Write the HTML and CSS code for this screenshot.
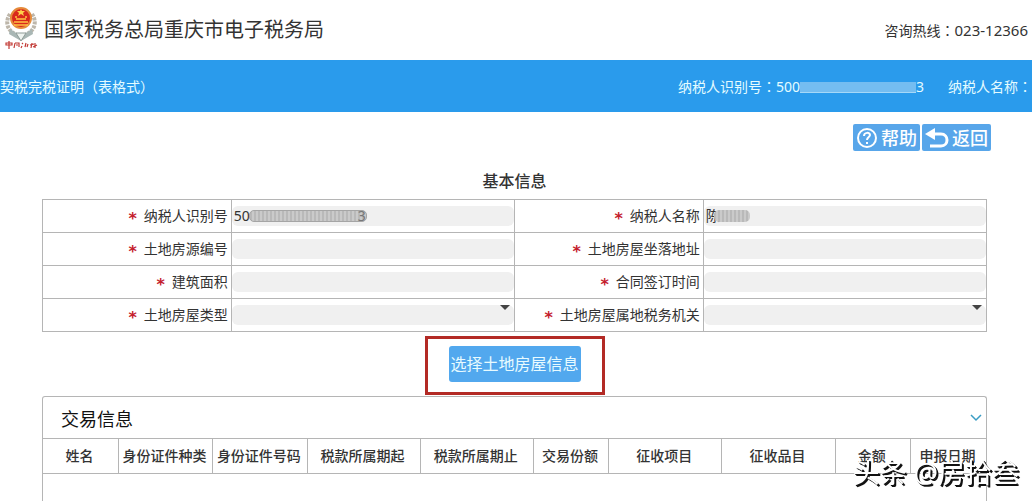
FILE: index.html
```html
<!DOCTYPE html>
<html lang="zh-CN">
<head>
    <meta charset="UTF-8">
    <meta name="viewport" content="width=device-width, initial-scale=1.0">
    <title>国家税务总局重庆市电子税务局</title>
    <link rel="stylesheet" href="styles.css">
</head>
<body>

    <header class="top">
        <svg class="logo" width="34" height="44" viewBox="0 0 34 44" aria-hidden="true">
            <path d="M6 8C0 17 4 26 15 30M28 8c6 9 2 18-9 22" fill="none" stroke="#bdb6aa" stroke-width="4" stroke-dasharray="3 1"/>
            <path d="M6 23l11 7 11-7 1 5-12 7-12-7z" fill="#a9b7b5"/>
            <path d="M12 27l5 8 5-8z" fill="#eef3f0" stroke="#8f9c98"/>
            <circle cx="17" cy="12" r="10" fill="#d9281c" stroke="#e58b3b" stroke-width="2"/>
            <path d="M17 3l1 2h3l-2 2 1 3-3-2-3 2 1-3-2-2h3z" fill="#ffd04a"/>
            <path d="M11 11h2M21 11h2M12 13h10M10 16h14M10 19h14" stroke="#ffc343" stroke-width="1.5"/>
            <path d="M2 37h6v2H2zM5 35v8M11 37l-1 5M11 37h4v4M12 39h2M18 37l1 1M18 40l-1 2M22 37l-1 4M24 38l-1 3M28 37l-1 5M26 39l4-1M29 41l4-2M31 37v5" fill="none" stroke="#c23a35" stroke-width="1.2"/>
        </svg>
        <h1>国家税务总局重庆市电子税务局</h1>
        <p class="hotline">咨询热线<span class="colon">：</span><span class="tel">023-12366</span></p>
    </header>

    <div class="bar">
        <span class="page-name">契税完税证明<span class="colon">（</span>表格式<span class="colon">）</span></span>
        <span>纳税人识别号<span class="colon">：</span>500<span class="bar-mask"></span>3</span>
        <span class="payer">纳税人名称<span class="colon">：</span></span>
    </div>

    <main>
        <div class="tools">
            <button type="button">
                <svg width="22" height="22" viewBox="0 0 22 22" fill="none" stroke="#fff" stroke-width="2" aria-hidden="true">
                    <circle cx="11" cy="11" r="9"/>
                    <path d="M8 9c0-4 6-4 6-1 0 2-3 2-3 5M11 15v2"/>
                </svg>
                帮助
            </button>
            <button type="button">
                <svg width="24" height="22" viewBox="0 0 24 22" aria-hidden="true">
                    <path d="M0 7l10-6v12z" fill="#fff"/>
                    <path d="M8 7h8c8 0 8 12 0 12H5" fill="none" stroke="#fff" stroke-width="3"/>
                </svg>
                返回
            </button>
        </div>

        <h2>基本信息</h2>
        <table class="info">
            <tr>
                <th><label for="payer-id">纳税人识别号</label></th>
                <td><input type="text" id="payer-id" value="50" readonly><span class="mask mask-id">3</span></td>
                <th><label for="payer-name">纳税人名称</label></th>
                <td><input type="text" id="payer-name" value="陈" readonly><span class="mask mask-name"></span></td>
            </tr>
            <tr>
                <th><label for="house-no">土地房源编号</label></th>
                <td><input type="text" id="house-no" readonly></td>
                <th><label for="address">土地房屋坐落地址</label></th>
                <td><input type="text" id="address" readonly></td>
            </tr>
            <tr>
                <th><label for="area">建筑面积</label></th>
                <td><input type="text" id="area" readonly></td>
                <th><label for="sign-date">合同签订时间</label></th>
                <td><input type="text" id="sign-date" readonly></td>
            </tr>
            <tr>
                <th><label for="house-type">土地房屋类型</label></th>
                <td><select id="house-type"><option></option></select></td>
                <th><label for="office">土地房屋属地税务机关</label></th>
                <td><select id="office"><option></option></select></td>
            </tr>
        </table>

        <div class="choose">
            <button type="button">选择土地房屋信息</button>
        </div>

        <section class="deal">
            <div class="deal-head">
                <h3>交易信息</h3>
                <svg width="12" height="10" viewBox="0 0 12 10" fill="none" stroke="#3b9dc4" stroke-width="1.5" aria-hidden="true">
                    <path d="M1 1l5 5 5-5"/>
                </svg>
            </div>
            <table class="deal-table">
                <colgroup>
                    <col class="w8"><col class="w10"><col class="w10"><col class="w12"><col class="w12">
                    <col class="w8"><col class="w12"><col class="w12"><col class="w8"><col class="w8">
                </colgroup>
                <tr>
                    <th>姓名</th>
                    <th>身份证件种类</th>
                    <th>身份证件号码</th>
                    <th>税款所属期起</th>
                    <th>税款所属期止</th>
                    <th>交易份额</th>
                    <th>征收项目</th>
                    <th>征收品目</th>
                    <th>金额</th>
                    <th>申报日期</th>
                </tr>
            </table>
        </section>
    </main>

    <div class="watermark">头条 @房拾叁</div>

</body>
</html>
```

FILE: styles.css
```css
* {
    box-sizing: border-box;
}
body {
    margin: 0;
    height: 100vh;
    display: flex;
    flex-direction: column;
    overflow: hidden;
    font-family: "Noto Sans", "Noto Sans CJK SC", sans-serif;
    font-size: 14px;
    line-height: 20px;
    color: #333;
    background: #fff;
}
h1, h2, h3, p {
    margin: 0;
    font-weight: normal;
}
button, input, select {
    font: inherit;
    border: none;
}
/* centred punctuation */
.colon {
    font-family: "Noto Sans CJK TC", sans-serif;
    font-feature-settings: "locl" 0;
    -webkit-locale: "zh-TW";
}

/* header */
.top {
    display: flex;
    align-items: center;
    height: 60px;
    padding: 0 4px;
}
.logo {
    margin-right: 6px;
    margin-bottom: 4px;
}
h1 {
    font-size: 20px;
    line-height: 28px;
}
.hotline {
    margin-left: auto;
}
.tel {
    font-size: 15px;
}
.bar {
    display: flex;
    align-items: center;
    height: 52px;
    flex-shrink: 0;
    color: #e4fbff;
    background: #2a9bec;
    white-space: nowrap;
}
.page-name {
    margin-right: auto;
}
.payer {
    margin-left: 24px;
}
.bar-mask {
    display: inline-block;
    width: 116px;
    height: 11px;
    vertical-align: -1px;
    background: #74bdf1;
    border-bottom: 1px solid #a5d8f8;
}

/* content */
main {
    flex: 1;
    display: flex;
    flex-direction: column;
    padding: 12px 45px 0 42px;
}
.tools {
    display: flex;
    justify-content: flex-end;
    gap: 2px;
    margin-right: -4px;
}
.tools button {
    display: flex;
    align-items: center;
    gap: 3px;
    height: 27px;
    padding: 0 3px;
    font-size: 18px;
    font-weight: 500;
    color: #fff;
    background: #58a6ea;
    border-radius: 2px;
}
h2 {
    margin: 18px 0 6px;
    font-size: 16px;
    font-weight: 500;
    line-height: 24px;
    text-align: center;
}
table {
    width: 100%;
    border-collapse: collapse;
    table-layout: fixed;
}
.info th, .info td {
    height: 33px;
    padding: 0;
    border: 1px solid #b5b5b5;
}
.info th {
    width: 20%;
    padding-right: 3px;
    font-weight: normal;
    text-align: right;
}
.info td {
    position: relative;
    width: 30%;
}
.info label::before {
    content: "*";
    margin-right: 7px;
    font-family: "DejaVu Sans", sans-serif;
    font-size: 16px;
    font-weight: bold;
    line-height: 16px;
    vertical-align: -3px;
    color: #c4202e;
}
.info input, .info select {
    display: block;
    width: 100%;
    height: 20px;
    padding: 0 2px;
    color: #333;
    background: #f0f0f0;
    border-radius: 6px;
}
.info select {
    appearance: none;
}
.info td:has(select)::after {
    content: "";
    position: absolute;
    top: 6px;
    right: 4px;
    border: 5px solid transparent;
    border-top-color: #444;
    border-bottom: none;
}
/* hidden part of the number and the name */
.mask {
    position: absolute;
    top: 10px;
    height: 12px;
    border-radius: 5px;
    line-height: 12px;
    text-align: right;
    color: #777;
    background: repeating-linear-gradient(90deg, #b9b9b9 0 2px, #cacaca 2px 4px);
}
.mask-id {
    left: 17px;
    width: 118px;
    border: 1px solid #a5a5a5;
    line-height: 10px;
}
.mask-name {
    left: 10px;
    width: 36px;
}
.choose {
    align-self: center;
    margin: 4px 0 1px;
    padding: 7px 21px 10px;
    border: 3px solid #b32a25;
}
.choose button {
    display: block;
    width: 132px;
    height: 36px;
    padding: 0;
    font-size: 16px;
    color: #e8fbff;
    background: #52a8ee;
    border-radius: 3px;
}

/* deal list */
.deal {
    flex: 1;
    border: 1px solid #b5b5b5;
    border-bottom: none;
    border-radius: 3px 3px 0 0;
}
.deal-head {
    display: flex;
    align-items: center;
    justify-content: space-between;
    height: 41px;
    padding: 2px 4px 0 18px;
}
h3 {
    font-size: 18px;
    line-height: 26px;
    color: #111;
}
.deal-table th {
    height: 35px;
    padding: 0 2px 0 0;
    font-weight: 500;
    white-space: nowrap;
    border: 1px solid #b5b5b5;
}
.deal-table th:first-child {
    border-left: none;
}
.deal-table th:last-child {
    border-right: none;
}
.w8 { width: 8%; }
.w10 { width: 10%; }
.w12 { width: 12%; }

.watermark {
    position: fixed;
    right: 13px;
    bottom: 8px;
    font-size: 27px;
    line-height: 40px;
    color: #fff;
    text-shadow: 1px 1px 0 #111, 2px 2px 0 #111;
}
```
